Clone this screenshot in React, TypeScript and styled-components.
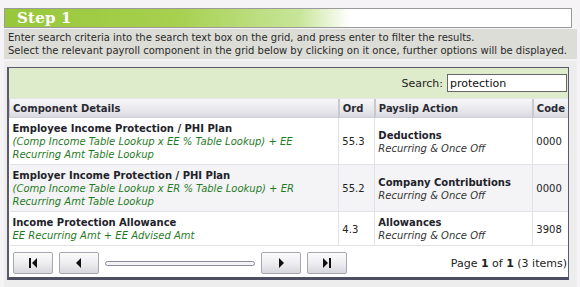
import React from "react";
import styled, { createGlobalStyle } from "styled-components";

const Global = createGlobalStyle`
  html, body { margin: 0; padding: 0; background: #f6f3f6; }
  body { font-family: "DejaVu Sans", Verdana, sans-serif; font-size: 10px; color: #222; }
`;

const Page = styled.div`
  width: 580px;
  height: 287px;
  padding: 8px 3px 0 4px;
  box-sizing: border-box;
`;

const StepHeader = styled.div`
  width: 568px;
  height: 20px;
  box-sizing: border-box;
  border: 1px solid #9a9a9a;
  background: linear-gradient(to right, #98c73a 0%, #a6d04e 30%, #c8e59a 52%, #ffffff 61%, #ffffff 100%);
  display: flex;
  align-items: center;
  padding-left: 12px;
`;

const StepTitle = styled.span`
  font-family: "DejaVu Serif", "Liberation Serif", serif;
  font-weight: bold;
  font-size: 15px;
  color: #ffffff;
  letter-spacing: 0.2px;
`;

const Description = styled.div`
  margin-top: 1px;
  background: #dcddd6;
  padding: 2px 4px 2px 4px;
  line-height: 13px;
  color: #2a2a2a;
  font-size: 10px;
`;

const GridOuter = styled.div`
  margin-top: 2px;
  background: #ededed;
  padding: 6px 8px 9px 3px;
`;

const GridBox = styled.div`
  border: 1px solid #5a5a6a;
  border-bottom: 3px solid #4e4e62;
  border-left-width: 2px;
  background: #fff;
`;

const SearchBar = styled.div`
  background: #dfeccb;
  height: 30px;
  display: flex;
  align-items: center;
  justify-content: flex-end;
  padding-right: 1px;
  gap: 4px;
  border-bottom: 1px solid #e6e6e6;
`;

const SearchLabel = styled.span`
  font-size: 11px;
  color: #222;
`;

const SearchInput = styled.input`
  width: 120px;
  height: 18px;
  box-sizing: border-box;
  border: 1px solid #666;
  font-family: "DejaVu Sans", Verdana, sans-serif;
  font-size: 11px;
  padding: 0 2px;
  color: #111;
  background: #fff;
  outline: none;
`;

const Table = styled.table`
  width: 100%;
  border-collapse: collapse;
`;

const Th = styled.th<{ $w?: number }>`
  text-align: left;
  font-weight: bold;
  color: #2a2a33;
  height: 18px;
  padding: 0 3px;
  background: linear-gradient(to bottom, #f7f7f9 0%, #e8e8ec 60%, #d9d9e0 100%);
  border-left: 2px solid #c9c9d2;
  border-bottom: 1px solid #cfcfd6;
  width: ${(p) => (p.$w ? `${p.$w}px` : "auto")};
  &:first-child { border-left: 1px solid #c9c9d2; }
`;

const Tr = styled.tr<{ $alt?: boolean }>`
  background: ${(p) => (p.$alt ? "#f4f4f6" : "#ffffff")};
`;

const Td = styled.td`
  padding: 4px 3px 3px 3px;
  border-left: 1px solid #e2e2e6;
  border-bottom: 1px solid #e2e2e6;
  vertical-align: middle;
  line-height: 13px;
  &:first-child { border-left: none; }
`;

const Name = styled.div`
  font-weight: bold;
  color: #22222a;
`;

const Formula = styled.div`
  font-style: italic;
  color: #1f7a1f;
`;

const Sub = styled.div`
  font-style: italic;
  color: #333;
`;

const Pager = styled.div`
  display: flex;
  align-items: center;
  padding: 6px 1px 3px 4px;
  gap: 6px;
`;

const PagerButton = styled.button`
  width: 40px;
  height: 22px;
  border: 1px solid #a8a8b0;
  border-radius: 2px;
  background: linear-gradient(to bottom, #fbfbfc 0%, #ececf0 55%, #d6d6de 100%);
  display: flex;
  align-items: center;
  justify-content: center;
  padding: 0;
`;

const Slider = styled.div`
  width: 148px;
  height: 3px;
  border: 1px solid #8a8a98;
  border-radius: 3px;
  background: #f4f4f6;
`;

const PageInfo = styled.div`
  margin-left: auto;
  font-size: 11px;
  color: #222;
`;

const Icon = ({ kind }: { kind: "first" | "prev" | "next" | "last" }) => {
  const tri = {
    first: <><rect x="1" y="0" width="2" height="10" /><polygon points="9,0 9,10 4,5" /></>,
    prev: <polygon points="7,0 7,10 2,5" />,
    next: <polygon points="3,0 3,10 8,5" />,
    last: <><polygon points="1,0 1,10 6,5" /><rect x="7" y="0" width="2" height="10" /></>,
  }[kind];
  return (
    <svg width="10" height="10" viewBox="0 0 10 10" fill="#111">
      {tri}
    </svg>
  );
};

const rows = [
  {
    name: "Employee Income Protection / PHI Plan",
    formula: "(Comp Income Table Lookup x EE % Table Lookup) + EE Recurring Amt Table Lookup",
    ord: "55.3",
    action: "Deductions",
    code: "0000",
  },
  {
    name: "Employer Income Protection / PHI Plan",
    formula: "(Comp Income Table Lookup x ER % Table Lookup) + ER Recurring Amt Table Lookup",
    ord: "55.2",
    action: "Company Contributions",
    code: "0000",
  },
  {
    name: "Income Protection Allowance",
    formula: "EE Recurring Amt + EE Advised Amt",
    ord: "4.3",
    action: "Allowances",
    code: "3908",
  },
];

export default function App() {
  return (
    <>
      <Global />
      <Page>
        <StepHeader>
          <StepTitle>Step 1</StepTitle>
        </StepHeader>
        <Description>
          Enter search criteria into the search text box on the grid, and press enter to filter the results.
          <br />
          Select the relevant payroll component in the grid below by clicking on it once, further options will be displayed.
        </Description>
        <GridOuter>
          <GridBox>
            <SearchBar>
              <SearchLabel>Search:</SearchLabel>
              <SearchInput defaultValue="protection" />
            </SearchBar>
            <Table>
              <thead>
                <tr>
                  <Th>Component Details</Th>
                  <Th $w={28}>Ord</Th>
                  <Th $w={150}>Payslip Action</Th>
                  <Th $w={28}>Code</Th>
                </tr>
              </thead>
              <tbody>
                {rows.map((r, i) => (
                  <Tr key={r.name} $alt={i === 1}>
                    <Td>
                      <Name>{r.name}</Name>
                      <Formula>{r.formula}</Formula>
                    </Td>
                    <Td>{r.ord}</Td>
                    <Td>
                      <Name>{r.action}</Name>
                      <Sub>Recurring &amp; Once Off</Sub>
                    </Td>
                    <Td>{r.code}</Td>
                  </Tr>
                ))}
              </tbody>
            </Table>
            <Pager>
              <PagerButton><Icon kind="first" /></PagerButton>
              <PagerButton><Icon kind="prev" /></PagerButton>
              <Slider />
              <PagerButton><Icon kind="next" /></PagerButton>
              <PagerButton><Icon kind="last" /></PagerButton>
              <PageInfo>
                Page <b>1</b> of <b>1</b> (3 items)
              </PageInfo>
            </Pager>
          </GridBox>
        </GridOuter>
      </Page>
    </>
  );
}
